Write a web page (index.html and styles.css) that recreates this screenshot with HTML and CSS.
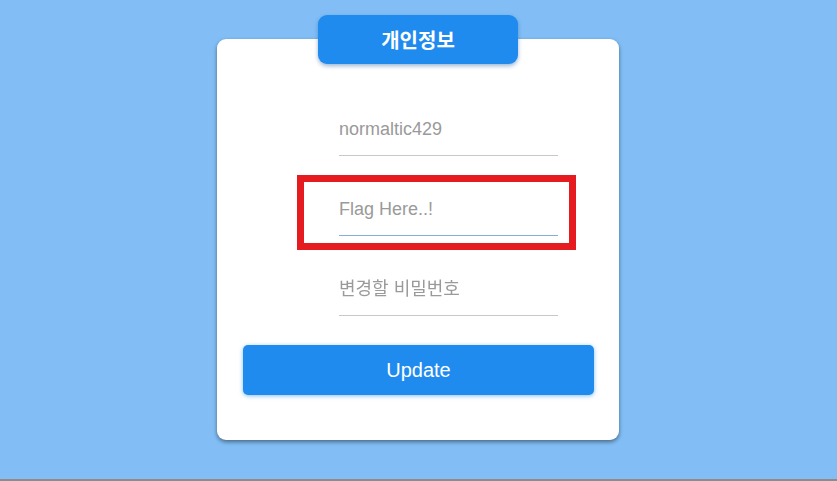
FILE: index.html
```html
<!DOCTYPE html>
<html lang="ko">
<head>
    <meta charset="UTF-8">
    <meta name="viewport" content="width=device-width, initial-scale=1.0">
    <title>개인정보</title>
    <link rel="stylesheet" href="styles.css">
</head>
<body>
    <div class="page">
        <div class="card">
            <div class="card-tab">개인정보</div>

            <form class="info-form" onsubmit="return false;">
                <div class="field">
                    <input class="input-field" type="text" placeholder="normaltic429" />
                </div>
                <!-- flag field, marked in red -->
                <div class="field marked">
                    <input class="input-field active" type="text" placeholder="Flag Here..!" autofocus />
                </div>
                <div class="field">
                    <input class="input-field" type="password" placeholder="변경할 비밀번호" />
                </div>
                <button class="btn" type="submit">Update</button>
            </form>
        </div>
    </div>
    <div class="bottom-edge"></div>
</body>
</html>
```

FILE: styles.css
```css
body {
    margin: 0;
    font-family: "Liberation Sans", Arial, "Noto Sans CJK KR", sans-serif;
    background: #82bef5;
}
.page {
    height: 479px;
    padding-top: 39px;
    padding-right: 1px;
    box-sizing: border-box;
}
.card {
    position: relative;
    width: 402px;
    height: 401px;
    margin: 0 auto;
    background: #fff;
    border-radius: 9px;
    box-shadow: 0 2px 4px rgba(0,0,0,0.45);
    box-sizing: border-box;
    padding: 67px 25px 0 26px;
}
.card-tab {
    position: absolute;
    top: -24px;
    left: 101px;
    width: 200px;
    height: 49px;
    background: #1f8bef;
    color: #fff;
    border-radius: 9px;
    font-family: "Noto Sans CJK KR", sans-serif;
    font-weight: bold;
    font-size: 20px;
    line-height: 49px;
    text-align: center;
    box-shadow: 0 2px 4px rgba(30,90,160,0.45);
}
.info-form {
    display: flex;
    flex-direction: column;
    gap: 30px;
}
.field {
    position: relative;
    padding-left: 96px;
}
.input-field {
    display: block;
    width: 219px;
    height: 50px;
    padding: 0 0 2px 0;
    margin: 0;
    border: none;
    border-bottom: 1px solid #c8c8c8;
    font-family: "Liberation Sans", Arial, "Noto Sans CJK KR", sans-serif;
    font-size: 18px;
    color: #333;
    outline: none;
    box-sizing: border-box;
    caret-color: #000;
}
.input-field::placeholder {
    color: #9a9a9a;
}
.input-field:focus,
.input-field.active {
    border-bottom-color: #86aed6;
}
.marked::after {
    content: "";
    position: absolute;
    left: 54px;
    top: -11px;
    width: 279px;
    height: 75px;
    border: 7px solid #e51b1f;
    box-sizing: border-box;
    pointer-events: none;
}
.btn {
    margin-top: -1px;
    width: 351px;
    height: 50px;
    background: #1f8bef;
    color: #fff;
    border: none;
    border-radius: 5px;
    font-family: "Liberation Sans", Arial, sans-serif;
    font-size: 20px;
    cursor: pointer;
    box-shadow: 0 1px 4px rgba(31,139,239,0.55);
}
.btn:hover {
    background: #1a7fdc;
}
.bottom-edge {
    height: 2px;
    background: #8c8c8c;
}
```
